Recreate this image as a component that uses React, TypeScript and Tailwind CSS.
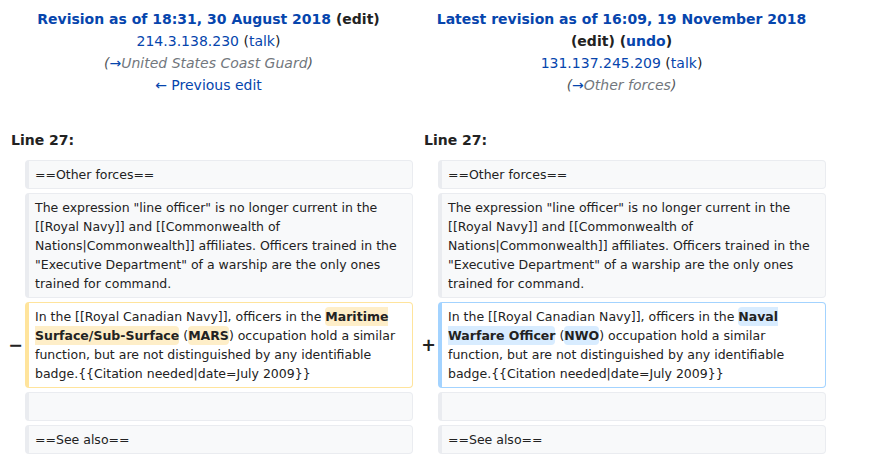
import React from 'react';

const link = 'text-[#0645ad]';

const Context: React.FC<{ children?: React.ReactNode }> = ({ children }) => (
  <div className="bg-[#f8f9fa] border border-l-4 border-[#eaecf0] rounded-[4px] px-[6px] py-[4px] text-[12.5px] leading-[19px] text-[#222]">
    {children ?? <br />}
  </div>
);

const Marker: React.FC<{ sign?: string }> = ({ sign }) => (
  <div className="flex items-center justify-end text-[17.5px] font-bold leading-[21px] text-[#222] pl-[3px] -mr-[2px]">
    {sign}
  </div>
);

const Hl: React.FC<{ children: React.ReactNode; tone: 'del' | 'add' }> = ({ children, tone }) => (
  <span
    className={`font-bold rounded-[4px] py-[2px] ${tone === 'del' ? 'bg-[#feeec8]' : 'bg-[#d8ecff]'}`}
  >
    {children}
  </span>
);

const row = 'grid grid-cols-[17px_388px_17px_388px] gap-x-[4px]';

export default function App() {
  const contextText =
    'The expression "line officer" is no longer current in the [[Royal Navy]] and [[Commonwealth of Nations|Commonwealth]] affiliates. Officers trained in the "Executive Department" of a warship are the only ones trained for command.';

  return (
    <div
      className="w-[874px] h-[458px] bg-white overflow-hidden pl-[4px] pt-[8px] text-[#222]"
      style={{ fontFamily: '"DejaVu Sans", sans-serif' }}
    >
      {/* header */}
      <div className={`${row} text-[14px] leading-[22px]`}>
        <div className="col-span-2 text-center">
          <div className="font-bold">
            <span className={link}>Revision as of 18:31, 30 August 2018</span> (edit)
          </div>
          <div>
            <span className={link}>214.3.138.230</span> (<span className={link}>talk</span>)
          </div>
          <div className="italic text-[#54595d]">
            (<span className={link}>→</span>
            <span className="text-[#72777d]">United States Coast Guard</span>)
          </div>
          <div className={link}>← Previous edit</div>
        </div>
        <div className="col-span-2 text-center">
          <div className="font-bold">
            <span className={link}>Latest revision as of 16:09, 19 November 2018</span>
          </div>
          <div className="font-bold">
            (<span>edit</span>) (<span className={link}>undo</span>)
          </div>
          <div>
            <span className={link}>131.137.245.209</span> (<span className={link}>talk</span>)
          </div>
          <div className="italic text-[#54595d]">
            (<span className={link}>→</span>
            <span className="text-[#72777d]">Other forces</span>)
          </div>
        </div>
      </div>

      {/* line numbers */}
      <div className={`${row} mt-[31px] text-[14px] leading-[22px] font-bold h-[29px] pt-[2px]`}>
        <div className="col-span-2 pl-[7px]">Line 27:</div>
        <div className="col-span-2 pl-[7px]">Line 27:</div>
      </div>

      <div className="flex flex-col gap-y-[4px] mt-[4px]">
        <div className={row}>
          <Marker />
          <Context>==Other forces==</Context>
          <Marker />
          <Context>==Other forces==</Context>
        </div>
        <div className={row}>
          <Marker />
          <Context>{contextText}</Context>
          <Marker />
          <Context>{contextText}</Context>
        </div>
        <div className={row}>
          <Marker sign="−" />
          <div className="bg-white border border-l-4 border-[#ffe49c] rounded-[4px] px-[6px] py-[4px] text-[12.5px] leading-[19px]">
            In the [[Royal Canadian Navy]], officers in the <Hl tone="del">Maritime Surface/Sub-Surface</Hl> (
            <Hl tone="del">MARS</Hl>) occupation hold a similar function, but are not distinguished by any identifiable
            badge.{'{{'}Citation needed|date=July 2009{'}}'}
          </div>
          <Marker sign="+" />
          <div className="bg-white border border-l-4 border-[#a3d3ff] rounded-[4px] px-[6px] py-[4px] text-[12.5px] leading-[19px]">
            In the [[Royal Canadian Navy]], officers in the <Hl tone="add">Naval Warfare Officer</Hl> (
            <Hl tone="add">NWO</Hl>) occupation hold a similar function, but are not distinguished by any identifiable
            badge.{'{{'}Citation needed|date=July 2009{'}}'}
          </div>
        </div>
        <div className={row}>
          <Marker />
          <Context />
          <Marker />
          <Context />
        </div>
        <div className={row}>
          <Marker />
          <Context>==See also==</Context>
          <Marker />
          <Context>==See also==</Context>
        </div>
      </div>
    </div>
  );
}
